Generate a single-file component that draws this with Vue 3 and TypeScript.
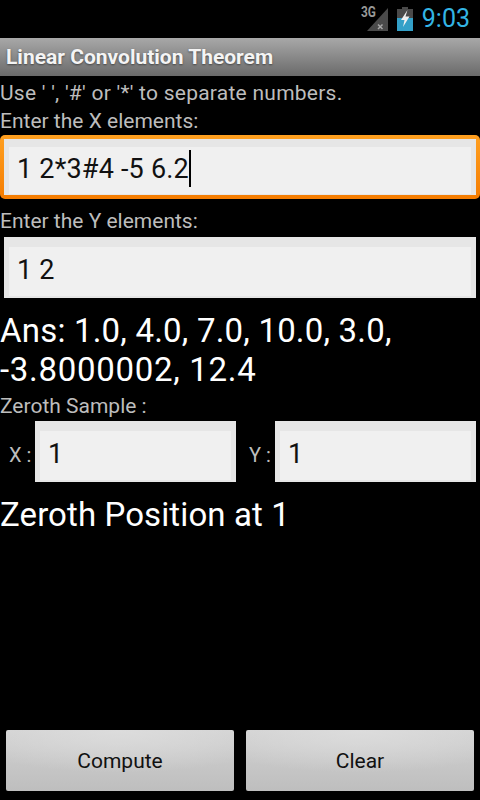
<script setup lang="ts">
import { ref } from "vue";

const xElements = ref("1 2*3#4 -5 6.2");
const yElements = ref("1 2");
const zerothX = ref("1");
const zerothY = ref("1");
const answerLines = ref(["Ans: 1.0, 4.0, 7.0, 10.0, 3.0,", "-3.8000002, 12.4"]);
</script>

<template>
  <div id="screen">
    <div id="status-bar">
      <span id="network-label">3G</span>
      <svg id="signal-icon" width="21" height="23" viewBox="0 0 21 23">
        <path d="M21 0V23H0Z" fill="#4a4a4a" />
        <path d="M11 16.5l4.5 4.5M15.5 16.5l-4.5 4.5" stroke="#a8a8a8" stroke-width="1.5" fill="none" />
      </svg>
      <svg id="battery-icon" width="16" height="24" viewBox="0 0 16 24">
        <path d="M5 0H11V2H5Z" fill="#4a4a4a" />
        <path d="M0 2H16V11H0Z" fill="#4a4a4a" />
        <path d="M0 11H16V24H0Z" fill="#33a0c8" />
        <path d="M10.5 3L4 13H7.5L6 20L12.5 9.5H8.5Z" fill="#f0f0f0" />
      </svg>
      <span id="clock">9:03</span>
    </div>

    <div id="title-bar">Linear Convolution Theorem</div>

    <div id="content">
      <p class="hint first-hint">Use ' ', '#' or '*' to separate numbers.</p>
      <p class="hint">Enter the X elements:</p>
      <div id="x-field-focus">
        <div class="field">{{ xElements }}<span id="caret"></span></div>
      </div>

      <p class="hint y-hint">Enter the Y elements:</p>
      <div id="y-field-wrap">
        <div class="field">{{ yElements }}</div>
      </div>

      <p class="result" id="answer">
        <span v-for="line in answerLines" :key="line" class="answer-line">{{ line }}</span>
      </p>

      <p class="hint small-hint">Zeroth Sample :</p>
      <div id="zeroth-row">
        <span class="axis-label">X :</span>
        <div class="field small-field">{{ zerothX }}</div>
        <span class="axis-label">Y :</span>
        <div class="field small-field">{{ zerothY }}</div>
      </div>

      <p class="result" id="position">Zeroth Position at 1</p>
    </div>

    <div id="button-row">
      <button type="button" class="action">Compute</button>
      <button type="button" class="action">Clear</button>
    </div>
  </div>
</template>

<style scoped>
#screen {
  display: flex;
  flex-direction: column;
  width: 480px;
  height: 800px;
  overflow: hidden;
  background: #000;
  font-family: Roboto, "Noto Sans", sans-serif;
}

#status-bar {
  position: relative;
  display: flex;
  justify-content: flex-end;
  align-items: center;
  height: 38px;
  padding-right: 10px;
  box-sizing: border-box;
}

#signal-icon {
  margin-right: 9px;
}

#network-label {
  position: absolute;
  left: 361px;
  top: 4px;
  font-size: 14px;
  font-weight: 700;
  line-height: 16px;
  color: #999;
  transform: scaleX(0.85);
  transform-origin: left;
}

#battery-icon {
  margin-right: 9px;
}

#clock {
  font-size: 25px;
  line-height: 38px;
  color: #33b5e5;
}

#title-bar {
  height: 38px;
  padding-left: 6px;
  box-sizing: border-box;
  background: linear-gradient(#a8a8a8, #6a6a6a);
  color: #f4f4f4;
  font-size: 21px;
  font-weight: 700;
  line-height: 38px;
  text-shadow: 0 1px 2px #444;
}

#content {
  display: flex;
  flex-direction: column;
}

.hint {
  margin: 0;
  color: #bdbdbd;
  font-size: 21px;
  line-height: 28px;
}

.first-hint {
  margin-top: 3px;
  letter-spacing: 0.25px;
}

.y-hint {
  margin-top: 8px;
}

.small-hint {
  margin-top: 3px;
}

#x-field-focus {
  height: 64px;
  padding: 4px;
  box-sizing: border-box;
  border-radius: 5px;
  background: linear-gradient(#ffa020, #f57c00);
}

#y-field-wrap {
  margin: 2px 4px 0;
}

.field {
  display: flex;
  align-items: center;
  height: 100%;
  min-height: 61px;
  padding: 0 0 4px 8px;
  box-sizing: border-box;
  background: #f0f0f0;
  border: 5px solid #e6e6e6;
  border-top-width: 10px;
  border-bottom-width: 2px;
  color: #111;
  font-size: 27px;
  letter-spacing: 0.2px;
  white-space: pre;
}

#x-field-focus .field {
  min-height: 56px;
  border-top-width: 8px;
  border-bottom-width: 1px;
}

#caret {
  width: 2px;
  height: 37px;
  background: #000;
}

.result {
  margin: 0;
  color: #fff;
  font-size: 33px;
  line-height: 39px;
}

#answer {
  margin-top: 13px;
}

.answer-line {
  display: block;
  letter-spacing: 0.2px;
}

.answer-line + .answer-line {
  letter-spacing: 0.7px;
}

#zeroth-row {
  display: flex;
  align-items: center;
  margin-top: 1px;
  padding: 0 4px 0 9px;
}

.axis-label {
  width: 26px;
  color: #bdbdbd;
  font-size: 20px;
  margin-top: 6px;
}

.small-field {
  width: 201px;
}

.small-field + .axis-label {
  margin-left: 13px;
}

#position {
  margin-top: 13px;
  letter-spacing: 0.1px;
}

#button-row {
  display: flex;
  gap: 12px;
  margin-top: auto;
  padding: 0 6px 9px;
}

.action {
  flex: 1;
  height: 61px;
  padding: 1px 0 0;
  border: none;
  border-radius: 2px;
  background:
    radial-gradient(ellipse 75% 70% at 50% 0, #dcdcdc, rgba(220, 220, 220, 0)),
    linear-gradient(#d2d2d2, #bebebe);
  color: #111;
  font-family: inherit;
  font-size: 21px;
}
</style>
